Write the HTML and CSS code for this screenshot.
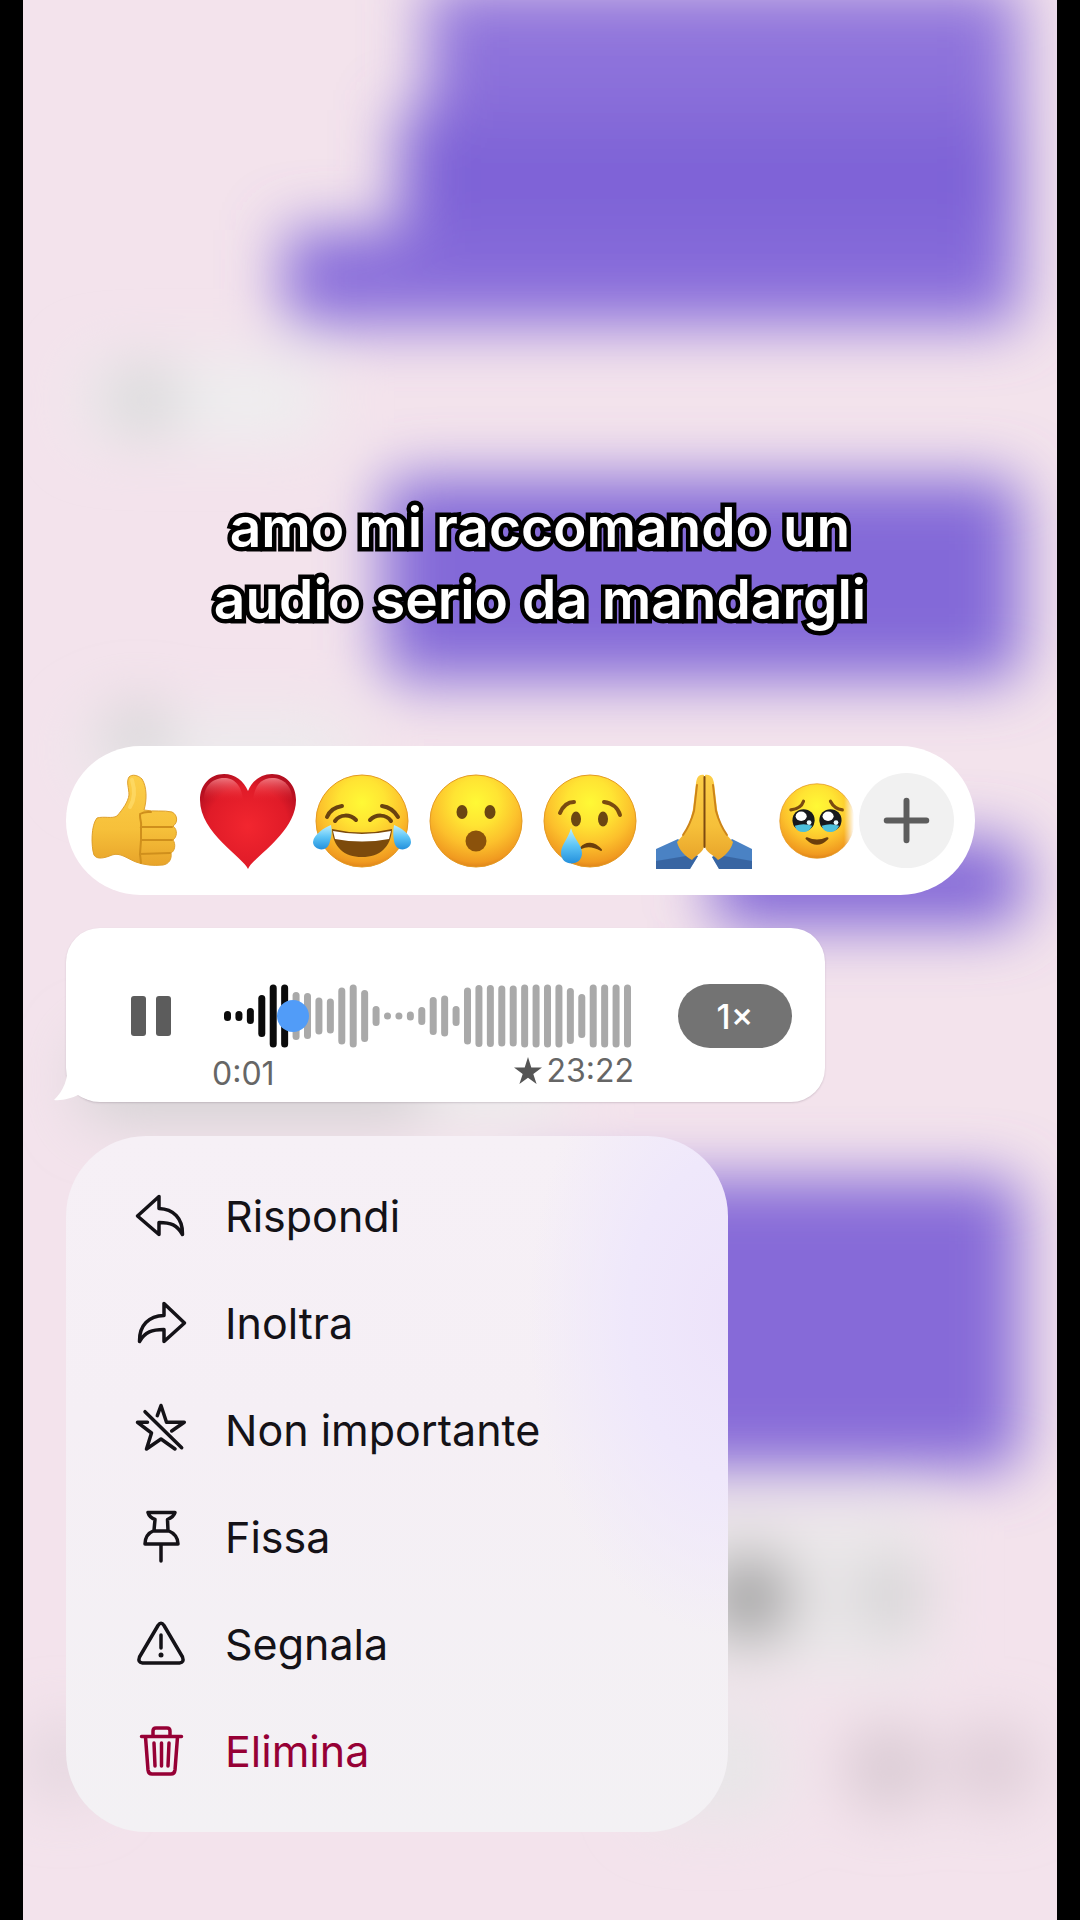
FILE: index.html
```html
<!DOCTYPE html>
<html lang="it">
<head>
  <meta charset="UTF-8" />
  <meta name="viewport" content="width=device-width, initial-scale=1" />
  <title>Chat</title>
  <link rel="stylesheet" href="styles.css">
</head>
<body>

  <main class="screen">

    <!-- blurred conversation -->
    <svg class="backdrop" viewBox="0 0 1034 1920" preserveAspectRatio="none" aria-hidden="true">
      <defs>
        <filter id="blur" filterUnits="userSpaceOnUse" x="-100" y="-100" width="1234" height="2120">
          <feGaussianBlur stdDeviation="30" />
        </filter>
        <linearGradient id="purple" x1="0" y1="0" x2="0" y2="1">
          <stop offset="0" stop-color="#9479dd" />
          <stop offset="0.3" stop-color="#8b70da" />
          <stop offset="0.55" stop-color="#7b60d6" />
          <stop offset="1" stop-color="#8d72dc" />
        </linearGradient>
      </defs>
      <g filter="url(#blur)">
        <path d="M404 -16H996V326H262V230H376V110H404Z" fill="url(#purple)" />
        <rect x="360" y="478" width="638" height="202" rx="20" fill="#8369d8" />
        <rect x="690" y="840" width="310" height="86" rx="20" fill="#8065d7" />
        <rect x="490" y="1178" width="508" height="292" rx="20" fill="#866bd8" />
        <rect x="60" y="360" width="240" height="80" rx="20" fill="#eeeeef" />
        <circle cx="120" cy="400" r="36" fill="#d6d6d7" />
        <rect x="60" y="720" width="270" height="60" rx="20" fill="#ececed" />
        <circle cx="115" cy="735" r="30" fill="#cfcfd0" />
        <rect x="60" y="1040" width="350" height="80" rx="20" fill="#d3d2d3" />
        <rect x="400" y="1040" width="140" height="80" rx="20" fill="#ececec" />
        <rect x="600" y="1505" width="310" height="170" rx="30" fill="#ebe8ea" />
        <circle cx="726" cy="1598" r="44" fill="#989898" />
        <circle cx="866" cy="1596" r="34" fill="#cfcdcf" />
        <rect x="620" y="1710" width="140" height="110" rx="30" fill="#e8e6e8" />
        <circle cx="865" cy="1768" r="42" fill="#d6c7d0" />
        <circle cx="970" cy="1765" r="42" fill="#dccbd5" />
        <circle cx="40" cy="1762" r="40" fill="#e3d6de" />
      </g>
    </svg>

    <p class="caption">amo mi raccomando un<br>audio serio da mandargli</p>

    <div class="reactions">
      <button class="reaction" type="button" aria-label="Pollice su">
        <svg viewBox="0 0 96 96">
          <defs>
            <linearGradient id="skin" x1="0" y1="0" x2="0" y2="1">
              <stop offset="0" stop-color="#fcce48" />
              <stop offset="0.6" stop-color="#f6c03a" />
              <stop offset="1" stop-color="#e8a42a" />
            </linearGradient>
          </defs>
          <path d="M11 45C18 43 26 46 31 43C37 36 42 29 43 22C43 15 40 9 43 4C46 1 52 2 56 6C61 14 61 27 58 37C68 39 78 37 86 39C92 42 92 50 87 53C92 57 91 64 87 67C90 71 89 78 85 80C86 86 83 91 77 92C67 93 58 92 50 89C42 86 34 79 26 82C19 85 11 87 8 82C5 73 5 52 11 45Z" fill="url(#skin)" stroke="#dfa02c" />
          <path d="M54 42C54 48 56 50 55 54H86M55 54V67H86M55 67L54 81L84 80M54 81L55 90M54 41C59 38 62 39 65 39" fill="none" stroke="#cf8f1c" stroke-width="2" stroke-linecap="round" />
          <path d="M46 7C49 17 49 26 44 34" fill="none" stroke="#ffe073" stroke-width="4" stroke-linecap="round" opacity=".6" />
        </svg>
      </button>
      <button class="reaction" type="button" aria-label="Cuore">
        <svg viewBox="0 0 96 96">
          <defs>
            <radialGradient id="heart" cx="0.5" cy="0.55" r="0.6">
              <stop offset="0" stop-color="#f2262f" />
              <stop offset="0.7" stop-color="#e01b28" />
              <stop offset="1" stop-color="#b40f20" />
            </radialGradient>
            <linearGradient id="shine" x1="0" y1="0" x2="0" y2="1">
              <stop offset="0" stop-color="#ff9a9f" stop-opacity=".75" />
              <stop offset="1" stop-color="#f2262f" stop-opacity="0" />
            </linearGradient>
          </defs>
          <path d="M48 96C44 85 0 60 0 27C0 12 10 1 24 1C35 1 44 8 48 18C52 8 61 1 72 1C86 1 96 12 96 27C96 60 52 85 48 96Z" fill="url(#heart)" />
          <path d="M4 28C3 14 12 5 24 5C34 5 42 12 43 28Z" fill="url(#shine)" />
          <path d="M53 28C54 12 62 5 72 5C84 5 93 14 92 28Z" fill="url(#shine)" />
        </svg>
      </button>
      <button class="reaction" type="button" aria-label="Risata con lacrime">
        <svg viewBox="0 0 96 96">
          <defs>
            <radialGradient id="face" cx="0.5" cy="0.3" r="0.72">
              <stop offset="0" stop-color="#fff935" />
              <stop offset="0.35" stop-color="#ffe433" />
              <stop offset="0.65" stop-color="#fcc02c" />
              <stop offset="0.9" stop-color="#f09a20" />
              <stop offset="1" stop-color="#d97c18" />
            </radialGradient>
            <linearGradient id="tear" x1="0" y1="0" x2="0" y2="1">
              <stop offset="0" stop-color="#bdf0ff" />
              <stop offset="0.5" stop-color="#5cc4f6" />
              <stop offset="1" stop-color="#2490dc" />
            </linearGradient>
          </defs>
          <circle cx="48" cy="48" r="46" fill="url(#face)" stroke="#e49a22" />
          <path d="M13 44C16 37 21 34 28 33M68 33C75 34 80 37 84 44M21 48C26 41 36 41 42 47M56 47C62 41 72 41 77 48" fill="none" stroke="#69420f" stroke-width="4" stroke-linecap="round" />
          <path d="M18 56Q48 63 78 56C77 74 66 84 48 84C30 84 19 74 18 56Z" fill="#7c4a0c" />
          <path d="M19 58Q48 64 77 58L75 66Q48 71 21 66Z" fill="#fff" />
          <path d="M17 52C10 55 0 61 -1 69C-1 77 14 81 16 68C18 63 18 57 17 52ZM80 52C87 55 97 61 97 69C97 77 82 81 80 68C79 63 79 57 80 52Z" fill="url(#tear)" />
        </svg>
      </button>
      <button class="reaction" type="button" aria-label="Stupore">
        <svg viewBox="0 0 96 96">
          <circle cx="48" cy="48" r="46" fill="url(#face)" stroke="#e49a22" />
          <ellipse cx="34" cy="39" rx="5.500" ry="7" fill="#6b4612" />
          <ellipse cx="62" cy="39" rx="5.500" ry="7" fill="#6b4612" />
          <circle cx="48" cy="68" r="10.500" fill="#8b520b" />
        </svg>
      </button>
      <button class="reaction" type="button" aria-label="Pianto">
        <svg viewBox="0 0 96 96">
          <circle cx="48" cy="48" r="46" fill="url(#face)" stroke="#e49a22" />
          <path d="M18 40C21 33 26 29 32 29M62 29C70 30 76 35 78 42" fill="none" stroke="#7a4b10" stroke-width="4" stroke-linecap="round" />
          <ellipse cx="34" cy="46" rx="5" ry="7.500" fill="#6b4612" />
          <ellipse cx="61" cy="46" rx="5" ry="7.500" fill="#6b4612" />
          <path d="M39 75C44 69 52 69 59 77C52 73 45 72 39 75Z" fill="#6b3f0c" stroke="#6b3f0c" stroke-width="2" stroke-linejoin="round" />
          <path d="M29 55C26 66 19 72 19 80C19 94 40 94 40 80C40 72 32 66 29 55Z" fill="url(#tear)" />
        </svg>
      </button>
      <button class="reaction" type="button" aria-label="Mani giunte">
        <svg viewBox="0 0 96 96">
          <path d="M0 76L22 66L42 83L34 96H0ZM96 76L76 66L56 84L63 96H96Z" fill="#4a82c4" />
          <path d="M0 96V88L30 83L42 83L34 96ZM96 96V88L68 83L56 84L63 96Z" fill="#294f87" opacity=".55" />
          <path d="M48 2C42 1 41 5 40 10L37 36C35 45 33 54 28 61L21 69C23 77 29 83 36 87C40 82 48 79 48 73Z" fill="url(#skin)" />
          <path d="M49 2C55 1 57 5 58 10L61 36C63 45 65 54 70 61L77 69C75 77 69 83 62 87C58 82 49 79 49 73Z" fill="url(#skin)" />
          <path d="M48.500 4V74" fill="none" stroke="#7e4a10" stroke-width="2" stroke-linecap="round" />
          <path d="M41 12L38 38C36 45 32 55 27 62M57 12L60 38C62 45 66 55 71 62" fill="none" stroke="#cc8418" stroke-width="2" stroke-linecap="round" />
        </svg>
      </button>
      <button class="reaction reaction-last" type="button" aria-label="Occhi lucidi">
        <svg viewBox="0 0 96 96">
          <circle cx="48" cy="48" r="47" fill="url(#face)" stroke="#e49a22" />
          <path d="M15 34C23 33 29 29 31 23M65 23C68 29 73 33 80 34" fill="none" stroke="#7a4b10" stroke-width="4" stroke-linecap="round" />
          <circle cx="31" cy="47" r="14" fill="#17191d" />
          <circle cx="65" cy="47" r="14" fill="#17191d" />
          <path d="M20 54Q31 50 42 54Q38 62 31 62Q22 62 20 54ZM54 54Q65 50 76 54Q72 62 65 62Q56 62 54 54Z" fill="#4dc0dc" />
          <ellipse cx="28" cy="42" rx="7" ry="6" fill="#fff" />
          <ellipse cx="62" cy="42" rx="7" ry="6" fill="#fff" />
          <circle cx="38" cy="50" r="3" fill="#e9fbff" />
          <circle cx="72" cy="50" r="3" fill="#e9fbff" />
          <path d="M35 70Q48 83 61 70Q48 76 35 70Z" fill="#6b3f0c" stroke="#6b3f0c" stroke-width="3" stroke-linejoin="round" />
        </svg>
      </button>
      <button class="add" type="button" aria-label="Altre reazioni">
        <svg viewBox="0 0 96 96">
          <path d="M48 28V68M28 48H68" fill="none" stroke="#5d5d5d" stroke-width="6" stroke-linecap="round" />
        </svg>
      </button>
    </div>

    <div class="bubble">
      <svg class="tail" viewBox="0 0 48 40" aria-hidden="true">
        <path d="M14 0C14 18 10 28 0 38C8 39 18 36 24 33C30 37 38 39 48 39V0Z" fill="#fff" />
      </svg>
      <button class="pause" type="button" aria-label="Pausa"><span></span><span></span></button>
      <div class="track">
        <div class="wave">
          <svg class="wave-bars" viewBox="0 0 407 64" preserveAspectRatio="none" aria-hidden="true"></svg>
          <input class="seek" type="range" min="0" max="100" value="14" aria-label="Posizione">
        </div>
        <div class="times">
          <span class="elapsed">0:01</span>
          <span class="sent">
            <svg class="star" viewBox="0 0 28 28" aria-hidden="true">
              <path d="M14 0L17.300 10.500H28L19.300 17L22.600 27L14 20.800L5.400 27L8.700 17L0 10.500H10.700Z" fill="#555" />
            </svg>23:22
          </span>
        </div>
      </div>
      <button class="speed" type="button">1×</button>
    </div>

    <div class="menu">
      <button class="item" type="button">
        <svg class="icon" viewBox="0 0 56 56">
          <path d="M4.500 28L26 8.500V20.500C40 21 50 30 49.500 46.500C44 37 38 34.500 26 34.500V46.500Z" />
        </svg>
        Rispondi
      </button>
      <button class="item" type="button">
        <svg class="icon" viewBox="0 0 56 56">
          <path d="M51.500 28L31 8.500V20.500C16 21 6 30 6.500 46.500C12 37 19 34.500 31 34.500V46.500Z" />
        </svg>
        Inoltra
      </button>
      <button class="item" type="button">
        <svg class="icon" viewBox="0 0 56 56">
          <path d="M24.300 13.700L28 3.500L33.500 20.300H51.300L38.700 29M12 9.700L48.700 45.700M14.500 20.300H4.500L18.500 31L13.500 47L28 37L42 47" />
        </svg>
        Non importante
      </button>
      <button class="item" type="button">
        <svg class="icon" viewBox="0 0 56 56">
          <path d="M15 3.500H42C41 7 38 9 34.500 10.500L35 21.500C41 24 45 29 45 35H12C12 29 15 24 21 21.500L22 10.500C18 9 16 7 15 3.500ZM21 22H35M28 35V52" />
        </svg>
        Fissa
      </button>
      <button class="item" type="button">
        <svg class="icon" viewBox="0 0 56 56">
          <path d="M25 9.500Q28 5 31 9.500L49.500 41Q51.500 46.500 46.500 47H9.500Q4.500 46.500 6.500 41ZM28 19V32" />
          <circle class="dot" cx="28" cy="39" r="2.500" />
        </svg>
        Segnala
      </button>
      <button class="item danger" type="button">
        <svg class="icon" viewBox="0 0 56 56">
          <path d="M8.500 13.500H48.500M20 13V8Q20 5 23 5H34Q37 5 37 8V13M12.500 14L15 47Q15.500 51 19 51H38Q41.500 51 42 47L44.500 14M21 20L22 43M28.500 20V43M36 20L35 43" />
        </svg>
        Elimina
      </button>
    </div>

  </main>

  <script>
    const bars = [10, 10, 16, 42, 63, 63, 48, 46, 37, 35, 57, 63, 52, 20, 7, 7, 9, 18,
      38, 41, 20, 57, 62, 62, 61, 61, 63, 63, 63, 63, 56, 44, 63, 63, 63, 63];
    const played = 6;
    const step = 400 / (bars.length - 1);

    document.querySelector('.wave-bars').innerHTML = bars.map((h, i) =>
      `<rect x="${i * step}" y="${32 - h / 2}" width="7" height="${h}" rx="3.5" fill="${i < played ? '#0b0b0b' : '#a9a9a9'}" />`
    ).join('');
  </script>

</body>
</html>
```
FILE: styles.css
```css
* {
  margin: 0; padding: 0; box-sizing: border-box;
}

body {
  min-height: 100vh;
  padding: 0 23px;
  background: #000;
  font-family: Inter, 'Open Sans', sans-serif;
  color: #141217;
}

button {
  border: 0;
  background: none;
  font: inherit;
  color: inherit;
  cursor: pointer;
}

svg {
  display: block;
  overflow: visible;
}

.screen {
  position: relative;
  min-height: 100vh;
  padding: 491px 43px 88px;
  background: #f3e3ec;
  overflow: hidden;
  display: flex;
  flex-direction: column;
  align-items: flex-start;
}

.backdrop {
  position: absolute;
  top: 0; left: 0;
  width: 100%; height: 100%;
}

.caption {
  position: relative;
  align-self: center;
  margin-bottom: 111px;
  font-size: 55px;
  line-height: 72px;
  font-weight: 600;
  text-align: center;
  white-space: nowrap;
  color: #fff;
  -webkit-text-stroke: 9px #000;
  paint-order: stroke fill;
  stroke-linejoin: round;
}

/* reactions */

.reactions {
  position: relative;
  display: flex;
  align-items: center;
  height: 149px;
  margin-bottom: 33px;
  padding: 0 21px 0 20px;
  border-radius: 75px;
  background: #fff;
}

.reaction {
  width: 96px;
  height: 96px;
  margin-right: 18px;
}

.reaction-last {
  width: 89px;
  height: 76px;
  margin-right: 0;
  padding-left: 9px;
  -webkit-mask-image: linear-gradient(to right, #000 74px, transparent 84px);
  mask-image: linear-gradient(to right, #000 74px, transparent 84px);
}

.reaction-last svg {
  width: 76px;
  height: 76px;
}

.add {
  width: 95px;
  height: 95px;
  border-radius: 50%;
  background: #f1f1f1;
}

/* voice message */

.bubble {
  position: relative;
  display: flex;
  width: 100%;
  max-width: 759px;
  height: 174px;
  margin-bottom: 34px;
  padding: 56px 33px 0 65px;
  border-radius: 34px;
  background: #fff;
  box-shadow: 0 1px 2px rgba(80, 60, 80, 0.2);
}

.tail {
  position: absolute;
  left: -12px;
  bottom: 0;
  width: 48px;
  height: 40px;
}

.pause {
  display: flex;
  justify-content: space-between;
  align-items: center;
  width: 40px;
  height: 64px;
  margin-right: 41px;
}

.pause span {
  width: 15px;
  height: 40px;
  border-radius: 3px;
  background: #5c5c5c;
}

.track {
  flex: 1;
}

.wave {
  position: relative;
  height: 64px;
  margin: 0 3px 0 12px;
}

.wave-bars {
  width: 100%;
  height: 64px;
}

.seek {
  position: absolute;
  top: 0; left: 0;
  width: 100%; height: 64px;
  background: none;
  -webkit-appearance: none;
  appearance: none;
}

.seek::-webkit-slider-thumb {
  -webkit-appearance: none;
  width: 32px;
  height: 32px;
  border-radius: 50%;
  background: #519cf8;
}

.times {
  display: flex;
  justify-content: space-between;
  align-items: flex-start;
  font-size: 32px;
  line-height: 40px;
  color: #666;
}

.elapsed {
  padding-top: 6px;
}

.sent {
  display: flex;
  align-items: center;
  gap: 4px;
  padding-top: 3px;
}

.star {
  width: 28px;
  height: 28px;
}

.speed {
  width: 114px;
  height: 64px;
  margin-left: 44px;
  border-radius: 32px;
  background: #737373;
  font-size: 34px;
  font-weight: 500;
  color: #fff;
}

/* context menu */

.menu {
  position: relative;
  width: 100%;
  max-width: 662px;
  padding: 26px 0 28px;
  border-radius: 80px;
  background:
    radial-gradient(ellipse 200px 320px at 100% 26%, #ede3fa 0%, #efe8fb 50%, rgba(243, 237, 249, 0) 100%),
    linear-gradient(#f6f0f6, #f5eff5 40%, #f3f1f4);
}

.item {
  display: flex;
  align-items: center;
  gap: 36px;
  width: 100%;
  height: 107px;
  padding: 0 67px;
  font-size: 43px;
  text-align: left;
}

.icon {
  width: 56px;
  height: 56px;
  fill: none;
  stroke: currentColor;
  stroke-width: 3.5;
  stroke-linecap: round;
  stroke-linejoin: round;
}

.dot {
  fill: currentColor;
  stroke: none;
}

.danger {
  color: #960035;
}
```
